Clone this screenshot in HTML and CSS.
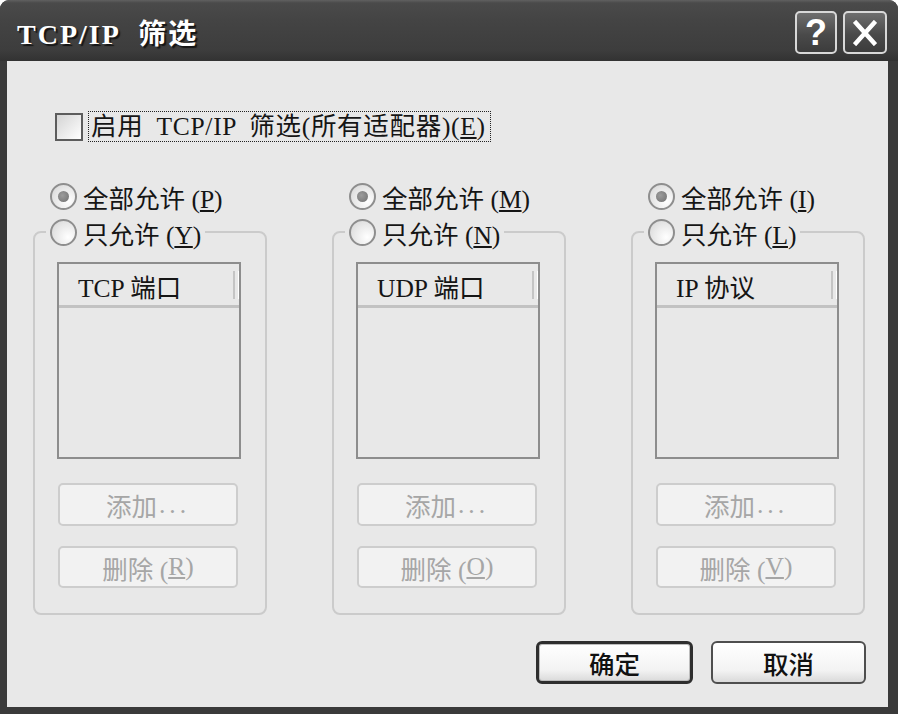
FILE: index.html
```html
<!DOCTYPE html>
<html lang="zh-CN">
<head>
<meta charset="utf-8">
<title>TCP/IP 筛选</title>
<link rel="stylesheet" href="styles.css">
</head>
<body>
<div class="window">
  <div class="titlebar">
    <span class="title">TCP/IP 筛选</span>
    <div class="caption-btns">
      <button class="cap help">?</button>
      <button class="cap close"><svg width="24" height="26" viewBox="0 0 24 26"><path d="M3 3 L21 23 M21 3 L3 23" stroke="#fff" stroke-width="4.5" stroke-linecap="square" fill="none"/></svg></button>
    </div>
  </div>
  <div class="client">
    <label class="enable"><span class="checkbox"></span><span class="focus">启用 TCP/IP 筛选(所有适配器)(<u>E</u>)</span></label>
    <div class="columns">
      <div class="col">
        <div class="radio-row"><span class="radio on"></span><span>全部允许 (<u>P</u>)</span></div>
        <fieldset class="group">
          <legend><span class="radio-row legend-row"><span class="radio"></span><span>只允许 (<u>Y</u>)</span></span></legend>
          <div class="listbox"><div class="lv-header"><span class="lv-col">TCP 端口</span></div></div>
          <button class="btn disabled add">添加<span class="dots">...</span></button>
          <button class="btn disabled del">删除 (<u>R</u>)</button>
        </fieldset>
      </div>
      <div class="col">
        <div class="radio-row"><span class="radio on"></span><span>全部允许 (<u>M</u>)</span></div>
        <fieldset class="group">
          <legend><span class="radio-row legend-row"><span class="radio"></span><span>只允许 (<u>N</u>)</span></span></legend>
          <div class="listbox"><div class="lv-header"><span class="lv-col">UDP 端口</span></div></div>
          <button class="btn disabled add">添加<span class="dots">...</span></button>
          <button class="btn disabled del">删除 (<u>O</u>)</button>
        </fieldset>
      </div>
      <div class="col">
        <div class="radio-row"><span class="radio on"></span><span>全部允许 (<u>I</u>)</span></div>
        <fieldset class="group">
          <legend><span class="radio-row legend-row"><span class="radio"></span><span>只允许 (<u>L</u>)</span></span></legend>
          <div class="listbox"><div class="lv-header"><span class="lv-col">IP 协议</span></div></div>
          <button class="btn disabled add">添加<span class="dots">...</span></button>
          <button class="btn disabled del">删除 (<u>V</u>)</button>
        </fieldset>
      </div>
    </div>
    <div class="footer">
      <button class="btn push default">确定</button>
      <button class="btn push cancel">取消</button>
    </div>
  </div>
</div>
</body>
</html>
```

FILE: styles.css
```css
* { box-sizing: border-box; }
html, body { margin: 0; padding: 0; background: #ffffff; }
body {
  width: 898px;
  height: 714px;
  overflow: hidden;
  font-family: "Liberation Serif", "Noto Sans CJK SC", serif;
  font-size: 25.5px;
  color: #151515;
}
.window {
  width: 898px;
  height: 714px;
  display: flex;
  flex-direction: column;
  background: #3a3a3a;
  border-radius: 9px 9px 0 0;
  overflow: hidden;
}
.titlebar {
  height: 61px;
  flex: none;
  display: flex;
  align-items: center;
  justify-content: space-between;
  padding: 0 11px 0 17px;
  background: linear-gradient(#606060 0, #4a4a4a 3px, #444444 20px, #3d3d3d 50px, #323232 61px);
}
.title {
  color: #ffffff;
  font-weight: bold;
  font-size: 28px;
  letter-spacing: 2px;
  word-spacing: 10px;
  text-shadow: 2px 2px 1px #151515;
  margin-top: 2px;
}
.caption-btns {
  display: flex;
  gap: 6px;
  align-self: flex-start;
  margin-top: 11px;
}
.cap {
  width: 42px;
  height: 43px;
  border: 2px solid #d8d8d8;
  border-radius: 5px;
  background: linear-gradient(#6e6e6e, #4a4a4a 55%, #3c3c3c);
  display: flex;
  align-items: center;
  justify-content: center;
  padding: 0;
  color: #ffffff;
  font-family: "Liberation Sans", sans-serif;
  font-weight: bold;
  font-size: 36px;
  line-height: 1;
}
.cap.close { width: 44px; }
.client {
  flex: 1;
  margin: 0 10px 7px 7px;
  background: #e8e8e8;
  padding: 50px 22px 0 26px;
  display: flex;
  flex-direction: column;
}
.enable {
  display: flex;
  align-items: center;
  gap: 5px;
  margin-left: 22px;
  height: 31px;
}
.checkbox {
  width: 28px;
  height: 28px;
  flex: none;
  border: 2px solid #5c5c5c;
  background: linear-gradient(135deg, #d4d4d4, #f2f2f2 70%, #ffffff);
}
.focus {
  border: 1px dotted #222222;
  padding: 0 4px 0 2px;
  height: 31px;
  line-height: 29px;
  word-spacing: 6px;
  letter-spacing: 0.7px;
  white-space: nowrap;
}
.columns {
  display: flex;
  gap: 65px;
  margin-top: 40px;
}
.col { width: 234px; flex: none; }
.radio-row {
  display: flex;
  align-items: center;
  gap: 6px;
  height: 28px;
  padding-left: 17px;
  white-space: nowrap;
}
.legend-row { padding-left: 0; }
.radio {
  width: 27px;
  height: 27px;
  flex: none;
  border-radius: 50%;
  border: 2px solid #8e8e8e;
  background: radial-gradient(circle at 70% 70%, #ffffff, #e4e4e4 65%, #d2d2d2);
  display: grid;
  place-items: center;
}
.radio.on::after {
  content: "";
  width: 11px;
  height: 11px;
  border-radius: 50%;
  background: radial-gradient(circle at 40% 40%, #9c9c9c, #707070);
}
.group {
  margin: 8px 0 0;
  width: 234px;
  min-width: 0;
  border: 2px solid #cbcbcb;
  border-radius: 8px;
  padding: 0 11px 25px;
}
.group legend {
  padding: 0 4px;
}
.listbox {
  margin: 16px 0 0 11px;
  width: 184px;
  height: 197px;
  border: 2px solid #8d8d8d;
}
.lv-header {
  height: 44px;
  display: flex;
  align-items: center;
  border-bottom: 3px solid #c2c2c2;
  padding-top: 1px;
}
.lv-col {
  width: 174px;
  flex: none;
  padding-left: 19px;
  white-space: nowrap;
}
.lv-header::after {
  content: "";
  width: 3px;
  height: 28px;
  border-left: 2px solid #c4c4c4;
  border-right: 1px solid #ffffff;
}
.btn {
  font: inherit;
  display: flex;
  align-items: center;
  justify-content: center;
  padding: 0;
  border-radius: 5px;
}
.btn.disabled {
  margin: 24px 0 0 12px;
  width: 180px;
  height: 43px;
  border: 2px solid #cdcdcd;
  background: #f2f2f2;
  color: #a6a6a6;
}
.btn.disabled.del {
  margin-top: 20px;
  height: 42px;
}
.dots { letter-spacing: 4px; margin-left: 2px; }
.footer {
  display: flex;
  justify-content: flex-end;
  gap: 18px;
  margin-top: 26px;
}
.push {
  height: 43px;
  color: #111111;
  border-radius: 6px;
  background: linear-gradient(#ffffff, #f3f3f3 70%, #dadada);
  font-weight: 500;
}
.push.default {
  width: 157px;
  border: 3px solid #2e2e2e;
  box-shadow: inset 0 0 0 1px #bdbdbd;
}
.push.cancel {
  width: 155px;
  border: 2px solid #4e4e4e;
}
```
